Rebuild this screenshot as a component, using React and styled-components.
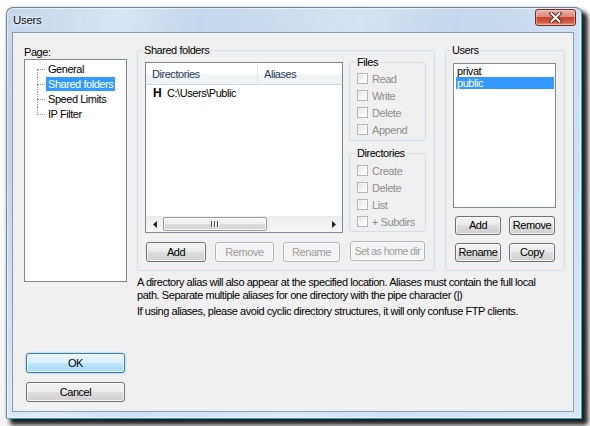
import React from "react";
import styled, { createGlobalStyle } from "styled-components";

const GlobalStyle = createGlobalStyle`
  html, body { margin: 0; padding: 0; background: #ffffff; }
  body { font-family: "Liberation Sans", Arial, sans-serif; }
  #root { width: 590px; height: 426px; }
  * { box-sizing: border-box; }
`;

const FONT = `font-family: "Liberation Sans", Arial, sans-serif; font-size: 11px; letter-spacing: -0.45px;`;

const Desktop = styled.div`
  width: 590px;
  height: 426px;
  padding: 7px 0 0 6px;
  overflow: hidden;
  background: linear-gradient(#ffffff, #f4f4f4);
`;

const Window = styled.div`
  width: 576px;
  height: 412px;
  display: flex;
  flex-direction: column;
  padding: 0 7px 6px 5px;
  border: 1px solid;
  border-color: #6f8298 #2aa4cc #2aa4cc #6f8298;
  border-radius: 7px 7px 2px 2px;
  background:
    linear-gradient(100deg, rgba(255,255,255,0) 0%, rgba(255,255,255,.35) 18%, rgba(255,255,255,0) 30%, rgba(255,255,255,.3) 55%, rgba(255,255,255,0) 70%, rgba(255,255,255,.25) 90%),
    linear-gradient(#c3d8ee, #bcd3eb 40%, #cfe1f3);
  box-shadow:
    inset 0 0 0 1px rgba(255,255,255,0.55),
    5px 5px 4px 1px rgba(0,0,0,0.85),
    0 0 3px rgba(0,0,0,0.25);
`;

const TitleBar = styled.div`
  height: 24px;
  flex: none;
  display: flex;
  justify-content: space-between;
  align-items: flex-start;
  padding-left: 1px;
`;

const TitleText = styled.div`
  margin-top: 6px;
  font-family: "Liberation Sans", Arial, sans-serif;
  font-size: 11.5px;
  letter-spacing: -0.3px;
  line-height: 13px;
  color: #111;
  text-shadow: 0 0 6px #fff, 0 0 3px #fff;
`;

const CloseButton = styled.div`
  width: 41px;
  height: 17px;
  margin-top: 1px;
  margin-right: -2px;
  display: flex;
  align-items: center;
  justify-content: center;
  border: 1px solid #6e2d26;
  border-radius: 3px;
  background: linear-gradient(#eab3a6 0%, #dd8a7a 45%, #c6452f 50%, #cf5a41 80%, #e49a7f 100%);
  box-shadow: inset 0 0 0 1px rgba(255,220,210,0.45);
`;

const Content = styled.div`
  flex: 1;
  display: flex;
  border: 1px solid #8a9db3;
  background: #f0f0f0;
  padding: 11px 8px 9px 11px;
`;

const LeftColumn = styled.div`
  width: 103px;
  flex: none;
  display: flex;
  flex-direction: column;
`;

const Label = styled.div`
  ${FONT}
  line-height: 13px;
  margin-top: 2px;
  color: #000;
`;

const Tree = styled.div`
  height: 223px;
  background: #fff;
  border: 1px solid #828790;
  padding-top: 2px;
`;

const TreeItem = styled.div`
  position: relative;
  height: 15px;
  display: flex;
  align-items: flex-start;
  padding-left: 21px;
  &::before {
    content: "";
    position: absolute;
    left: 12px;
    top: 7px;
    width: 8px;
    border-top: 1px dotted #9a9a9a;
  }
  &::after {
    content: "";
    position: absolute;
    left: 12px;
    top: ${(p) => (p.$first ? "7px" : "0")};
    height: ${(p) => (p.$last ? "8px" : p.$first ? "8px" : "15px")};
    border-left: 1px dotted #9a9a9a;
  }
`;

const TreeLabel = styled.span`
  ${FONT}
  display: block;
  height: 14px;
  line-height: 14px;
  padding: 0 2px;
  color: ${(p) => (p.$selected ? "#fff" : "#000")};
  background: ${(p) => (p.$selected ? "#3399ff" : "transparent")};
`;

const Spacer = styled.div`
  flex: 1;
`;

const Button = styled.button`
  ${FONT}
  flex: none;
  width: ${(p) => p.$w}px;
  height: ${(p) => p.$h || 20}px;
  margin: 0;
  padding: 0;
  line-height: 1;
  white-space: nowrap;
  overflow: hidden;
  color: ${(p) => (p.disabled ? "#9c9c9c" : "#000")};
  border: 1px solid ${(p) => (p.$default ? "#3c7fb1" : p.disabled ? "#b3b7ba" : "#707070")};
  border-radius: 3px;
  background: ${(p) =>
    p.$default
      ? "linear-gradient(#eaf6fd 0%, #d9f0fc 49%, #bee6fd 50%, #a7d9f5 100%)"
      : p.disabled
      ? "#f4f4f4"
      : "linear-gradient(#f2f2f2 0%, #ebebeb 49%, #dddddd 50%, #cfcfcf 100%)"};
  box-shadow: ${(p) =>
    p.$default
      ? "inset 0 0 0 1px rgba(255,255,255,.7), 0 0 2px rgba(60,160,230,.8)"
      : "inset 0 0 0 1px rgba(255,255,255,.75)"};
`;

const DialogButton = styled(Button)`
  margin-left: 2px;
  margin-top: ${(p) => p.$mt || 0}px;
`;

const RightArea = styled.div`
  margin-left: 10px;
  width: 428px;
  display: flex;
  flex-direction: column;
`;

const TopRow = styled.div`
  display: flex;
  gap: 10px;
`;

const Group = styled.fieldset`
  margin: 0;
  padding: 0;
  min-width: 0;
  width: ${(p) => p.$w}px;
  height: ${(p) => p.$h}px;
  flex: none;
  border: 1px solid #d5dfe5;
  border-radius: 3px;
`;

const Legend = styled.legend`
  ${FONT}
  line-height: 12px;
  margin-left: 5px;
  padding: 0 1px;
  color: #000;
`;

const FlagLegend = styled(Legend)`
  margin-left: -1px;
`;

const SharedBody = styled.div`
  display: flex;
  gap: 6px;
  padding: 0 8px 0 7px;
`;

const ListColumn = styled.div`
  width: 198px;
  margin-top: 6px;
  display: flex;
  flex-direction: column;
`;

const ListView = styled.div`
  height: 171px;
  display: flex;
  flex-direction: column;
  background: #fff;
  border: 1px solid #828790;
`;

const Header = styled.div`
  height: 22px;
  flex: none;
  display: flex;
  border-bottom: 1px solid #d5d5d5;
  background: linear-gradient(#ffffff 0%, #ffffff 45%, #f4f5f6 55%, #eff0f2 100%);
`;

const HeaderCell = styled.div`
  ${FONT}
  width: ${(p) => (p.$w ? p.$w + "px" : "auto")};
  flex: ${(p) => (p.$w ? "none" : 1)};
  display: flex;
  align-items: center;
  padding-left: 6px;
  color: #1e395b;
  border-right: ${(p) => (p.$w ? "1px solid #e3e5e8" : "none")};
`;

const ListBody = styled.div`
  flex: 1;
`;

const DirRow = styled.div`
  ${FONT}
  height: 16px;
  display: flex;
  align-items: center;
  padding-left: 7px;
  color: #000;
`;

const HomeMark = styled.span`
  font-weight: bold;
  font-size: 12px;
  letter-spacing: 0;
  width: 14px;
`;

const ScrollBar = styled.div`
  height: 16px;
  flex: none;
  display: flex;
  align-items: center;
  background: linear-gradient(#ececec, #f6f6f6);
`;

const ArrowBtn = styled.div`
  width: 17px;
  height: 16px;
  flex: none;
  display: flex;
  align-items: center;
  justify-content: center;
`;

const Thumb = styled.div`
  width: 104px;
  height: 14px;
  flex: none;
  display: flex;
  align-items: center;
  justify-content: center;
  gap: 1px;
  border: 1px solid #9c9c9c;
  border-radius: 2px;
  background: linear-gradient(#f6f6f6 0%, #ececec 50%, #dcdcdc 51%, #d4d4d4 100%);
  box-shadow: inset 0 0 0 1px rgba(255,255,255,.8);
`;

const GripLine = styled.span`
  width: 1px;
  height: 6px;
  background: #4d4d4d;
  box-shadow: 1px 0 0 #fff;
  margin-right: 1px;
`;

const Track = styled.div`
  flex: 1;
`;

const ButtonRow = styled.div`
  margin-top: 9px;
  display: flex;
  gap: 9px;
  padding-left: 1px;
`;

const FlagColumn = styled.div`
  width: 77px;
  display: flex;
  flex-direction: column;
`;

const FlagGroup = styled.fieldset`
  margin: 0 0 ${(p) => p.$mb || 0}px;
  padding: ${(p) => p.$pt}px 0 ${(p) => p.$pb}px 7px;
  min-width: 0;
  border: 1px solid #d5dfe5;
  border-radius: 3px;
`;

const CheckRow = styled.div`
  height: 17px;
  display: flex;
  align-items: center;
  gap: 4px;
`;

const CheckBox = styled.span`
  width: 11px;
  height: 11px;
  flex: none;
  border: 1px solid #b5b5b5;
  background: linear-gradient(135deg, #dedede, #f7f7f7 60%, #ffffff);
  box-shadow: inset 0 0 0 1px rgba(255,255,255,.6);
`;

const CheckText = styled.span`
  ${FONT}
  color: #8e8e8e;
`;

const HomeButton = styled(Button)`
  margin-top: 9px;
  margin-left: 1px;
  font-size: 10.5px;
  letter-spacing: -0.55px;
`;

const UsersBody = styled.div`
  padding: 7px 8px 0 7px;
`;

const ListBox = styled.div`
  height: 145px;
  background: #fff;
  border: 1px solid #828790;
  padding: 1px 1px 0 2px;
`;

const UserRow = styled.div`
  ${FONT}
  height: 12px;
  line-height: 12px;
  padding-left: 1px;
  color: ${(p) => (p.$selected ? "#fff" : "#000")};
  background: ${(p) => (p.$selected ? "#3399ff" : "transparent")};
`;

const UserButtons = styled.div`
  margin: 8px 2px 0;
  display: grid;
  grid-template-columns: 46px 46px;
  column-gap: 8px;
  row-gap: 8px;
`;

const Notes = styled.div`
  ${FONT}
  margin-top: 5px;
  color: #000;
`;

const Para = styled.p`
  margin: 0 0 ${(p) => p.$mb || 0}px;
  line-height: 13px;
  white-space: nowrap;
`;

function CloseGlyph() {
  return (
    <svg width="13" height="11" viewBox="0 0 13 11">
      <path d="M2.5 1.5 L10.5 9.5 M10.5 1.5 L2.5 9.5" stroke="#5b1c16" strokeWidth="4" strokeLinecap="square" fill="none" />
      <path d="M2.5 1.5 L10.5 9.5 M10.5 1.5 L2.5 9.5" stroke="#ffffff" strokeWidth="2" strokeLinecap="square" fill="none" />
    </svg>
  );
}

function Arrow({ dir }) {
  return (
    <svg width="4" height="7" viewBox="0 0 4 7">
      {dir === "left" ? <path d="M4 0 L0 3.5 L4 7 Z" fill="#222" /> : <path d="M0 0 L4 3.5 L0 7 Z" fill="#222" />}
    </svg>
  );
}

function Check({ label }) {
  return (
    <CheckRow>
      <CheckBox />
      <CheckText>{label}</CheckText>
    </CheckRow>
  );
}

const pages = ["General", "Shared folders", "Speed Limits", "IP Filter"];

export default function App() {
  return (
    <>
      <GlobalStyle />
      <Desktop>
        <Window>
          <TitleBar>
            <TitleText>Users</TitleText>
            <CloseButton>
              <CloseGlyph />
            </CloseButton>
          </TitleBar>
          <Content>
            <LeftColumn>
              <Label>Page:</Label>
              <Tree>
                {pages.map((p, i) => (
                  <TreeItem key={p} $first={i === 0} $last={i === pages.length - 1}>
                    <TreeLabel $selected={i === 1}>{p}</TreeLabel>
                  </TreeItem>
                ))}
              </Tree>
              <Spacer />
              <DialogButton $w={99} $default>OK</DialogButton>
              <DialogButton $w={99} $mt={9}>Cancel</DialogButton>
            </LeftColumn>

            <RightArea>
              <TopRow>
                <Group $w={298} $h={227}>
                  <Legend>Shared folders</Legend>
                  <SharedBody>
                    <ListColumn>
                      <ListView>
                        <Header>
                          <HeaderCell $w={112}>Directories</HeaderCell>
                          <HeaderCell>Aliases</HeaderCell>
                        </Header>
                        <ListBody>
                          <DirRow>
                            <HomeMark>H</HomeMark>
                            C:\Users\Public
                          </DirRow>
                        </ListBody>
                        <ScrollBar>
                          <ArrowBtn>
                            <Arrow dir="left" />
                          </ArrowBtn>
                          <Thumb>
                            <GripLine />
                            <GripLine />
                            <GripLine />
                          </Thumb>
                          <Track />
                          <ArrowBtn>
                            <Arrow dir="right" />
                          </ArrowBtn>
                        </ScrollBar>
                      </ListView>
                      <ButtonRow>
                        <Button $w={60}>Add</Button>
                        <Button $w={59} disabled>Remove</Button>
                        <Button $w={57} disabled>Rename</Button>
                      </ButtonRow>
                    </ListColumn>

                    <FlagColumn>
                      <FlagGroup $pt={2} $pb={2} $mb={6}>
                        <FlagLegend>Files</FlagLegend>
                        <Check label="Read" />
                        <Check label="Write" />
                        <Check label="Delete" />
                        <Check label="Append" />
                      </FlagGroup>
                      <FlagGroup $pt={3} $pb={1}>
                        <FlagLegend>Directories</FlagLegend>
                        <Check label="Create" />
                        <Check label="Delete" />
                        <Check label="List" />
                        <Check label="+ Subdirs" />
                      </FlagGroup>
                      <HomeButton $w={75} disabled>Set as home dir</HomeButton>
                    </FlagColumn>
                  </SharedBody>
                </Group>

                <Group $w={120} $h={227}>
                  <Legend>Users</Legend>
                  <UsersBody>
                    <ListBox>
                      <UserRow>privat</UserRow>
                      <UserRow $selected>public</UserRow>
                    </ListBox>
                    <UserButtons>
                      <Button $w={46} $h={19}>Add</Button>
                      <Button $w={46} $h={19}>Remove</Button>
                      <Button $w={46} $h={19}>Rename</Button>
                      <Button $w={46} $h={19}>Copy</Button>
                    </UserButtons>
                  </UsersBody>
                </Group>
              </TopRow>

              <Notes>
                <Para $mb={3}>
                  A directory alias will also appear at the specified location. Aliases must contain the full local
                  <br />
                  path. Separate multiple aliases for one directory with the pipe character (|)
                </Para>
                <Para>If using aliases, please avoid cyclic directory structures, it will only confuse FTP clients.</Para>
              </Notes>
            </RightArea>
          </Content>
        </Window>
      </Desktop>
    </>
  );
}
